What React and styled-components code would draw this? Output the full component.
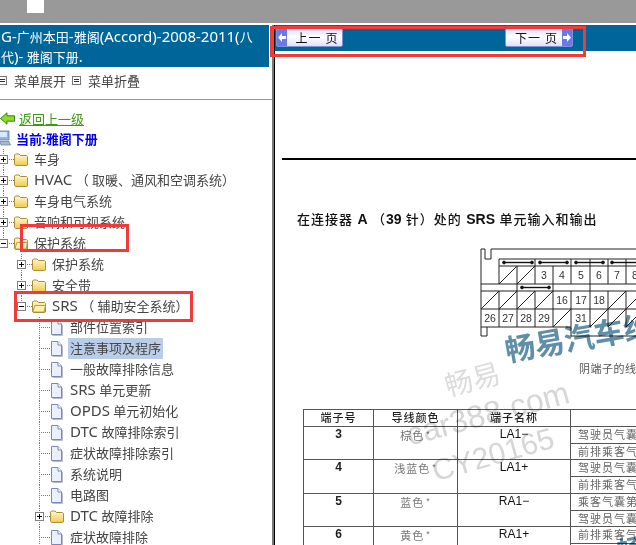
import styled, {createGlobalStyle} from 'styled-components'

const GlobalStyle = createGlobalStyle`
  html, body {
    margin: 0;
    padding: 0;
    background: #fff;
    overflow: hidden;
  }
  body {
    font-family: "Noto Sans", "Noto Sans CJK SC", sans-serif;
    font-size: 13px;
    color: #333;
    text-spacing-trim: space-all;
  }
`

const treeRows = [
  {depth: 0, kind: 'closed', label: '车身'},
  {depth: 0, kind: 'closed', label: 'HVAC （ 取暖、通风和空调系统）'},
  {depth: 0, kind: 'closed', label: '车身电气系统'},
  {depth: 0, kind: 'closed', label: '音响和可视系统'},
  {depth: 0, kind: 'open', label: '保护系统', last: true},
  {depth: 1, kind: 'closed', label: '保护系统'},
  {depth: 1, kind: 'closed', label: '安全带'},
  {depth: 1, kind: 'open', label: 'SRS （ 辅助安全系统）', last: true},
  {depth: 2, kind: 'page', label: '部件位置索引'},
  {depth: 2, kind: 'page', label: '注意事项及程序', selected: true},
  {depth: 2, kind: 'page', label: '一般故障排除信息'},
  {depth: 2, kind: 'page', label: 'SRS 单元更新'},
  {depth: 2, kind: 'page', label: 'OPDS 单元初始化'},
  {depth: 2, kind: 'page', label: 'DTC 故障排除索引'},
  {depth: 2, kind: 'page', label: '症状故障排除索引'},
  {depth: 2, kind: 'page', label: '系统说明'},
  {depth: 2, kind: 'page', label: '电路图'},
  {depth: 2, kind: 'closed', label: 'DTC 故障排除'},
  {depth: 2, kind: 'page', label: '症状故障排除'},
]

const pins = [
  {no: '3', color: '棕色', name: 'LA1−', desc: ['驾驶员气囊第一', '前排乘客气囊第']},
  {no: '4', color: '浅蓝色', name: 'LA1+', desc: ['驾驶员气囊第一', '前排乘客气囊第']},
  {no: '5', color: '蓝色', name: 'RA1−', desc: ['乘客气囊第一级', '驾驶员气囊第二']},
  {no: '6', color: '黄色', name: 'RA1+', desc: ['前排乘客气囊第', '驾驶员气囊第二']},
]

const Page = styled.div`
  width: 636px;
  height: 545px;
  display: flex;
  flex-direction: column;
  overflow: hidden;
  position: relative;
`

const TopBar = styled.div`
  height: 23px;
  background: #999;
  flex: none;
  padding-left: 27px;
  margin-bottom: 2px;
`

const TopTab = styled.div`
  width: 17px;
  height: 13px;
  background: #fff;
`

const Main = styled.div`
  flex: 1;
  display: flex;
  min-height: 0;
`

const Sidebar = styled.div`
  width: 272px;
  flex: none;
  overflow: hidden;
`

const SideHeader = styled.div`
  width: 269px;
  height: 42px;
  box-sizing: border-box;
  background: #006699;
  color: #fff;
  line-height: 20px;
  padding: 2px 12px 0 1px;
  overflow: hidden;
`

const Latin = styled.span`
  font-size: 15px;
  line-height: 1;
`

const MenuBar = styled.div`
  height: 33px;
  box-sizing: border-box;
  display: flex;
  align-items: center;
  border-bottom: 1px solid #999;
  padding-bottom: 5px;
  color: #444;
`

const MenuItem = styled.span`
  display: flex;
  align-items: center;
  gap: 7px;
  margin-right: 6px;
  margin-left: ${p => p.$offset || 0}px;
`

const MenuBox = styled.i`
  display: block;
  width: 9px;
  height: 9px;
  box-sizing: border-box;
  border: 1px solid #777;
  padding: 1px;
  background: repeating-linear-gradient(#333 0 1px, #fff 1px 2px);
  background-clip: content-box;
`

const BackRow = styled.div`
  height: 20px;
  margin-top: 8px;
  display: flex;
  align-items: center;
  gap: 4px;
`

const BackLink = styled.a`
  color: #3f9a12;
  text-decoration: underline;
`

const CurrentRow = styled.div`
  height: 20px;
  display: flex;
  align-items: center;
  gap: 5px;
  color: #0000ee;
  font-weight: 700;
  margin-bottom: 1px;
`

const Tree = styled.div`
  margin-left: -1px;
`

const Row = styled.div`
  height: 21px;
  display: flex;
  align-items: center;
  padding-left: ${p => p.$depth * 18}px;
  white-space: nowrap;
  color: #444;
`

const Joint = styled.span`
  width: 15px;
  height: 21px;
  flex: none;
  position: relative;
  display: flex;
  align-items: center;

  &::before {
    content: '';
    position: absolute;
    left: 4px;
    top: 0;
    bottom: ${p => (p.$last ? '10px' : '0')};
    border-left: 1px dotted #777;
  }
  &::after {
    content: '';
    position: absolute;
    left: 4px;
    right: 0;
    top: 10px;
    border-top: 1px dotted #777;
  }
`

const Toggle = styled.span`
  width: 9px;
  height: 9px;
  box-sizing: border-box;
  border: 1px solid #808080;
  background: #fff;
  position: relative;
  z-index: 1;

  &::before {
    content: '';
    position: absolute;
    left: 1px;
    right: 1px;
    top: 3px;
    height: 1px;
    background: #000;
  }
  &::after {
    content: ${p => (p.$open ? 'none' : "''")};
    position: absolute;
    top: 1px;
    bottom: 1px;
    left: 3px;
    width: 1px;
    background: #000;
  }
`

const Label = styled.span`
  margin-left: ${p => (p.$selected ? 4 : 6)}px;
  padding: 0 ${p => (p.$selected ? 2 : 0)}px;
  line-height: 21px;
  background: ${p => (p.$selected ? '#b9cde8' : 'transparent')};
`

const Divider = styled.div`
  width: 3px;
  flex: none;
  background: #777;
  border-right: 1px solid #000;
  box-sizing: border-box;
`

const Content = styled.div`
  flex: 1;
  min-width: 0;
  overflow: hidden;
  position: relative;
`

const NavBar = styled.div`
  height: 26px;
  background: #006699;
  display: flex;
  justify-content: space-between;
  padding: 3px 63px 0 1px;
  box-sizing: border-box;
`

const PageButton = styled.div`
  width: ${p => p.$w}px;
  height: 19px;
  box-sizing: border-box;
  display: flex;
  flex-direction: ${p => (p.$next ? 'row-reverse' : 'row')};
  align-items: center;
  border: 1px solid #7f8fd8;
  border-radius: 2px;
  background: linear-gradient(#d9dcfa, #fff 45%, #dfe2fb);
  color: #111;
  font-size: 12px;
  letter-spacing: 1px;
  overflow: hidden;
`

const ButtonCap = styled.span`
  width: 10px;
  align-self: stretch;
  background: #6a78e8;
  display: flex;
  align-items: center;
  justify-content: center;
  flex: none;
`

const ButtonText = styled.span`
  flex: 1;
  text-align: center;
  padding-left: 5px;
`

const Scan = styled.div`
  padding-left: 7px;
  filter: blur(0.35px);
`

const Rule = styled.div`
  height: 2px;
  background: #000;
  margin-top: 107px;
`

const Heading = styled.div`
  margin: 50px 0 0 15px;
  height: 18px;
  line-height: 18px;
  color: #111;
  font-size: 13px;
  font-weight: 500;
  letter-spacing: 1px;
  white-space: nowrap;

  b {
    font-family: "Liberation Sans", sans-serif;
    font-size: 14px;
    letter-spacing: 0;
  }
`

const ConnectorBox = styled.div`
  margin: 19px 0 0 199px;
  height: 92px;
`

const Caption = styled.div`
  margin: 21px 0 0 297px;
  height: 16px;
  font-family: "Liberation Serif", "Noto Sans CJK SC", serif;
  font-size: 11px;
  color: #555;
  white-space: nowrap;
  letter-spacing: 0.5px;
`

const PinTable = styled.table`
  margin: 33px 0 0 21px;
  border-collapse: collapse;
  table-layout: fixed;
  width: 400px;
  font-size: 11px;
  color: #222;

  td, th {
    border: 1px solid #555;
    padding: 0;
    height: 15.75px;
    line-height: 15px;
    text-align: center;
    vertical-align: top;
    overflow: hidden;
    white-space: nowrap;
  }
  th {
    font-weight: 500;
    letter-spacing: 1px;
  }
`

const PinNo = styled.td`
  font-family: "Liberation Sans", sans-serif;
  font-weight: 700;
  font-size: 12px;
`

const PinColor = styled.td`
  color: #777;
  font-family: "Liberation Serif", "Noto Sans CJK SC", serif;
  letter-spacing: 1px;
`

const Star = styled.span`
  font-family: "Liberation Sans", sans-serif;
  font-size: 9px;
  vertical-align: 3px;
  margin-left: 2px;
`

const PinName = styled.td`
  font-family: "Liberation Sans", sans-serif;
  font-size: 12px;
  color: #111;
`

const PinDesc = styled.td`
  && {
    text-align: left;
    padding-left: 7px;
    color: #666;
    letter-spacing: 1px;
  }
`

const Watermark = styled.div`
  position: absolute;
  left: ${p => p.$x}px;
  top: ${p => p.$y}px;
  font-family: ${p => (p.$latin ? '"Liberation Sans", sans-serif' : '"Noto Sans CJK SC", sans-serif')};
  font-size: ${p => p.$size}px;
  font-weight: ${p => p.$weight || 400};
  color: ${p => p.$color};
  transform: rotate(${p => p.$angle}deg);
  transform-origin: left center;
  white-space: nowrap;
  line-height: 1;
  mix-blend-mode: multiply;
  pointer-events: none;
`

const RedBox = styled.div`
  position: absolute;
  left: ${p => p.$x}px;
  top: ${p => p.$y}px;
  width: ${p => p.$w}px;
  height: ${p => p.$h}px;
  box-sizing: border-box;
  border: 3px solid #f33a3a;
`

// latin runs sit a size above the cjk ones in the reference
function Mixed({text}) {
  return text.split(/([A-Za-z0-9.()-]+)/).map((part, idx) =>
    idx % 2 ? <Latin key={idx}>{part}</Latin> : part
  )
}

function Folder({open}) {
  return (
    <svg width="14" height="13" viewBox="0 0 14 13" style={{flex: 'none'}}>
      <defs>
        <linearGradient id="folderFill" x1="0" y1="0" x2="0" y2="1">
          <stop offset="0" stopColor="#fff8cf" />
          <stop offset="1" stopColor="#f0c94f" />
        </linearGradient>
      </defs>
      <path d="M.5 2 L1.5 1 H5 L6.5 2.5 H12.5 L13.5 3.5 V12 L12.5 12.5 H1.5 L.5 11.5 Z" fill="url(#folderFill)" stroke="#a88d3a" />
      {open && <path d="M.8 12 L3 5.5 H13.5 L12 12 Z" fill="#fdf0b0" stroke="#a88d3a" strokeWidth=".8" />}
    </svg>
  )
}

function PageIcon() {
  return (
    <svg width="14" height="16" viewBox="0 0 14 16" style={{flex: 'none'}}>
      <path d="M1.5 .5 H8 L11.5 4 V14.5 H1.5 Z" fill="#eaf1fd" stroke="#7d86b8" />
      <path d="M8 .5 V4 H11.5" fill="#fff" stroke="#7d86b8" />
      <path d="M2.5 15.5 H12.5 V5" fill="none" stroke="#b9bcc8" />
    </svg>
  )
}

function BackArrow() {
  return (
    <svg width="15" height="13" viewBox="0 0 15 13" style={{flex: 'none'}}>
      <path d="M.5 6.5 L7 .8 V3.8 H14.5 V9.2 H7 V12.2 Z" fill="#8fd92a" stroke="#2f8a10" />
    </svg>
  )
}

function Computer() {
  return (
    <svg width="11" height="16" viewBox="0 0 11 16" style={{flex: 'none'}}>
      <path d="M-1 1 H9 V10 H-1 Z" fill="#8db6e8" stroke="#5a78a8" strokeWidth=".8" />
      <path d="M0 2 H7 V7 H0 Z" fill="#d9e9fb" />
      <path d="M0 11.5 H9 L10.5 15 H1 Z" fill="#a9b8cc" stroke="#667b9a" strokeWidth=".7" />
    </svg>
  )
}

function ArrowCap({next}) {
  return (
    <ButtonCap>
      <svg width="8" height="9" viewBox="0 0 8 9">
        <path d={next ? 'M0 3 H4 V0 L8 4.5 L4 9 V6 H0 Z' : 'M8 3 H4 V0 L0 4.5 L4 9 V6 H8 Z'} fill="#fff" />
      </svg>
    </ButtonCap>
  )
}

function Connector() {
  const slashes = [
    [499, 265], [517, 265],
    [481, 290], [499, 290], [517, 290], [535, 290], [608, 290], [626, 290],
    [553, 308], [590, 308], [608, 308], [626, 308],
  ]
  const numbers = [
    ['3', 544, 265], ['4', 562, 265], ['5', 581, 265], ['6', 599, 265], ['7', 617, 265], ['8', 635, 265],
    ['16', 562, 290], ['17', 581, 290], ['18', 599, 290],
    ['26', 490, 308], ['27', 508, 308], ['28', 526, 308], ['29', 544, 308], ['31', 581, 308],
  ]
  const bars = [[504, 532, 261.5], [540, 567, 261.5], [576, 603, 261.5], [612, 640, 261.5], [522, 549, 286.5]]
  const verticals = [
    [499, 258, 283], [517, 265, 283], [535, 258, 283], [553, 265, 326], [571, 258, 283], [590, 258, 326], [608, 258, 283], [626, 258, 283],
    [571, 290, 326], [608, 290, 326], [626, 290, 326],
    [499, 290, 326], [517, 283, 326], [535, 290, 326],
  ]

  return (
    <svg width="155" height="92" viewBox="481 246 155 92" style={{display: 'block', overflow: 'visible'}}>
      <g stroke="#222" strokeWidth="1" fill="none">
        <path d="M481 248 H485 V258 H491 V248 H640 M481 248 V326 M499 258 H640 M499 265 H640 M481 283 H640 M481 290 H640 M481 308 H640 M481 326 H571 M481 326 V335 H487 V326 M571 326 V335 H640" />
        {verticals.map(([x, a, b], idx) => <line key={idx} x1={x} x2={x} y1={a} y2={b} />)}
        {slashes.map(([x, y], idx) => <line key={idx} x1={x} y1={y + 18} x2={x + 18} y2={y} />)}
      </g>
      {bars.map(([a, b, y], idx) => (
        <g key={idx} stroke="#111" fill="#111">
          <line x1={a} x2={b} y1={y} y2={y} strokeWidth="1.4" />
          <circle cx={a} cy={y} r="1.4" />
          <circle cx={b} cy={y} r="1.4" />
        </g>
      ))}
      {numbers.map(([n, x, y]) => (
        <text key={n} x={x} y={y + 13} textAnchor="middle" fontFamily="Liberation Sans, sans-serif" fontSize="10.5" fill="#333">{n}</text>
      ))}
    </svg>
  )
}

export default function App() {
  return (
    <Page>
      <GlobalStyle />
      <TopBar><TopTab /></TopBar>
      <Main>
        <Sidebar>
          <SideHeader><Mixed text="G-广州本田-雅阁(Accord)-2008-2011(八代)- 雅阁下册." /></SideHeader>
          <MenuBar>
            <MenuItem $offset={-2}><MenuBox />菜单展开</MenuItem>
            <MenuItem><MenuBox />菜单折叠</MenuItem>
          </MenuBar>
          <BackRow><BackArrow /><BackLink>返回上一级</BackLink></BackRow>
          <CurrentRow><Computer />当前:雅阁下册</CurrentRow>
          <Tree>
            {treeRows.map((row, idx) => (
              <Row key={idx} $depth={row.depth}>
                <Joint $last={row.last}>
                  {row.kind !== 'page' && <Toggle $open={row.kind === 'open'} />}
                </Joint>
                {row.kind === 'page' ? <PageIcon /> : <Folder open={row.kind === 'open'} />}
                <Label $selected={row.selected}><Mixed text={row.label} /></Label>
              </Row>
            ))}
          </Tree>
        </Sidebar>
        <Divider />
        <Content>
          <NavBar>
            <PageButton $w={67}><ArrowCap /><ButtonText>上一 页</ButtonText></PageButton>
            <PageButton $w={68} $next><ArrowCap next /><ButtonText>下一 页</ButtonText></PageButton>
          </NavBar>
          <Scan>
            <Rule />
            <Heading>在连接器 <b>A</b> （<b>39</b> 针）处的 <b>SRS</b> 单元输入和输出</Heading>
            <ConnectorBox><Connector /></ConnectorBox>
            <Caption>阴端子的线束</Caption>
            <PinTable>
              <colgroup>
                <col style={{width: 70}} />
                <col style={{width: 84}} />
                <col style={{width: 113}} />
                <col style={{width: 133}} />
              </colgroup>
              <tbody>
                <tr><th>端子号</th><th>导线颜色</th><th>端子名称</th><th /></tr>
                {pins.map(pin => [
                  <tr key={pin.no}>
                    <PinNo rowSpan={2}>{pin.no}</PinNo>
                    <PinColor rowSpan={2}>{pin.color}<Star>*</Star></PinColor>
                    <PinName rowSpan={2}>{pin.name}</PinName>
                    <PinDesc>{pin.desc[0]}</PinDesc>
                  </tr>,
                  <tr key={pin.no + 'b'}><PinDesc>{pin.desc[1]}</PinDesc></tr>,
                ])}
              </tbody>
            </PinTable>
          </Scan>
          <Watermark $x={230} $y={309} $size={30} $weight={700} $color="#5f8ea9" $angle={-10}>畅易汽车维修</Watermark>
          <Watermark $x={170} $y={346} $size={28} $color="#dcdcdc" $angle={-15}>畅易</Watermark>
          <Watermark $x={132} $y={394} $size={32} $color="#d6d6d6" $latin $angle={-15}>car388.com</Watermark>
          <Watermark $x={158} $y={432} $size={30} $color="#d6d6d6" $latin $angle={-16}>CY20165</Watermark>
          <Watermark $x={342} $y={512} $size={26} $weight={700} $color="#5f8ea9" $angle={-10}>畅</Watermark>
        </Content>
      </Main>
      <RedBox $x={270} $y={26} $w={316} $h={31} />
      <RedBox $x={20} $y={224} $w={109} $h={28} />
      <RedBox $x={14} $y={291} $w={179} $h={31} />
    </Page>
  )
}
